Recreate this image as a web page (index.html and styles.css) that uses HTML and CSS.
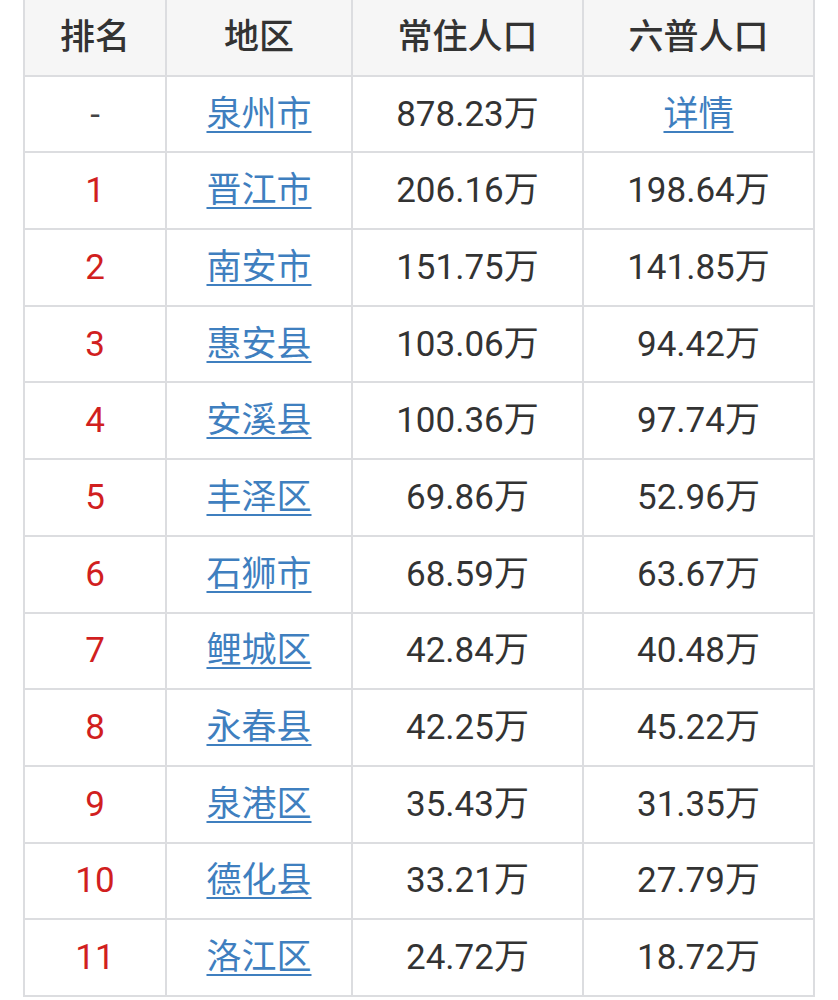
FILE: index.html
```html
<!DOCTYPE html>
<html lang="zh-CN">
<head>
<meta charset="utf-8">
<title>泉州人口</title>
<link rel="stylesheet" href="styles.css">
</head>
<body>
<table class="pop">
  <colgroup>
    <col class="c-rank"><col class="c-area"><col class="c-num"><col class="c-num">
  </colgroup>
  <thead>
    <tr><th>排名</th><th>地区</th><th>常住人口</th><th>六普人口</th></tr>
  </thead>
  <tbody>
    <tr><td class="dash">-</td><td><a href="#">泉州市</a></td><td>878.23万</td><td><a href="#">详情</a></td></tr>
    <tr><td class="rank">1</td><td><a href="#">晋江市</a></td><td>206.16万</td><td>198.64万</td></tr>
    <tr><td class="rank">2</td><td><a href="#">南安市</a></td><td>151.75万</td><td>141.85万</td></tr>
    <tr><td class="rank">3</td><td><a href="#">惠安县</a></td><td>103.06万</td><td>94.42万</td></tr>
    <tr><td class="rank">4</td><td><a href="#">安溪县</a></td><td>100.36万</td><td>97.74万</td></tr>
    <tr><td class="rank">5</td><td><a href="#">丰泽区</a></td><td>69.86万</td><td>52.96万</td></tr>
    <tr><td class="rank">6</td><td><a href="#">石狮市</a></td><td>68.59万</td><td>63.67万</td></tr>
    <tr><td class="rank">7</td><td><a href="#">鲤城区</a></td><td>42.84万</td><td>40.48万</td></tr>
    <tr><td class="rank">8</td><td><a href="#">永春县</a></td><td>42.25万</td><td>45.22万</td></tr>
    <tr><td class="rank">9</td><td><a href="#">泉港区</a></td><td>35.43万</td><td>31.35万</td></tr>
    <tr><td class="rank">10</td><td><a href="#">德化县</a></td><td>33.21万</td><td>27.79万</td></tr>
    <tr><td class="rank">11</td><td><a href="#">洛江区</a></td><td>24.72万</td><td>18.72万</td></tr>
  </tbody>
</table>
</body>
</html>
```
FILE: styles.css
```css
html, body {
  margin: 0;
  padding: 0;
  background: #ffffff;
}
body {
  font-family: Roboto, "Noto Sans CJK SC", sans-serif;
  color: #333333;
}
.pop {
  border-collapse: collapse;
  margin: -2px 0 0 23px;
  width: 792px;
  table-layout: fixed;
  font-size: 35px;
}
.c-rank { width: 142px; }
.c-area { width: 186px; }
.c-num { width: 231px; }
.pop th,
.pop td {
  border: 2px solid #dcdde0;
  height: 74.7px;
  padding: 0;
  text-align: center;
  vertical-align: middle;
  line-height: 1;
}
.pop th {
  background: #f6f6f6;
  font-weight: 500;
  color: #333333;
}
.pop td.rank {
  color: #d11f1f;
}
.pop td.dash {
  color: #444444;
}
.pop a {
  color: #3f7fbf;
  text-decoration: underline;
  text-decoration-thickness: 2px;
  text-underline-offset: 5px;
}
```
